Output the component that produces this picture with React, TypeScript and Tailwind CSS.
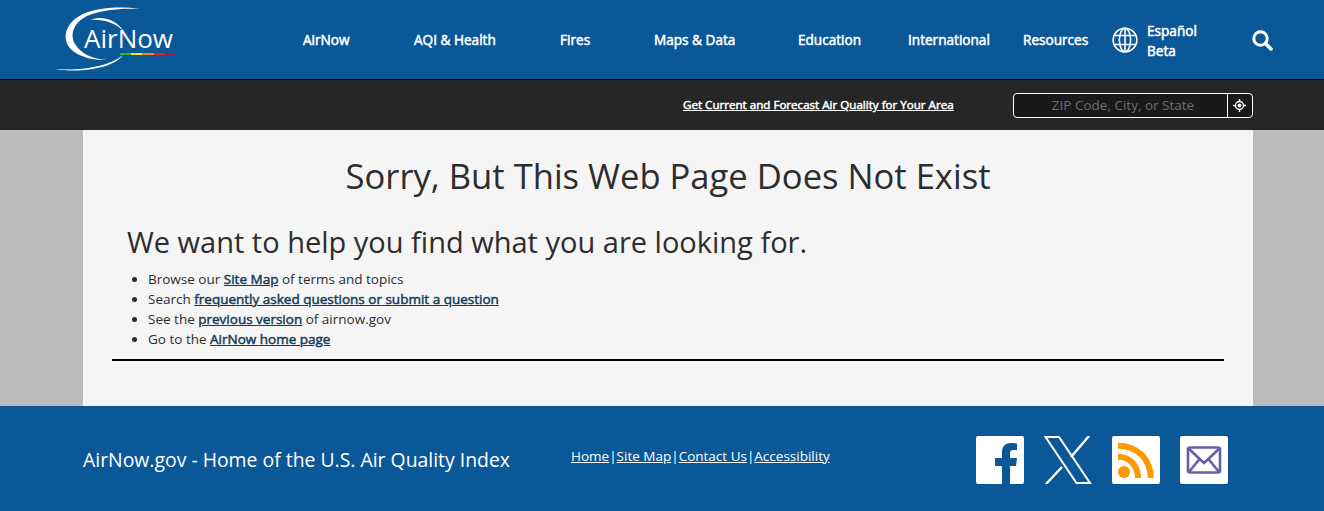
const navItems = [
    { label: 'AirNow', width: 'w-[111px]' },
    { label: 'AQI & Health', width: 'w-[146px]' },
    { label: 'Fires', width: 'w-[94px]' },
    { label: 'Maps & Data', width: 'w-[144px]' },
    { label: 'Education', width: 'w-[110px]' },
    { label: 'International', width: 'w-[115px]' },
    { label: 'Resources', width: 'w-[89px]' },
]

const fauxBold = '[-webkit-text-stroke:0.5px_currentColor]'

const Logo = () => (
    <svg width="122" height="66" viewBox="0 0 122 66" className="block">
        <path d="M85 4C62 1 42 3 28 9C13 16 6 30 14 42C20 50 36 56 52 55C38 54 26 49 20 39C14 28 20 17 32 11C46 5 66 3 85 4Z" fill="#fff" />
        <path d="M35 15C46 10 62 14 70 28C62 18 48 14 35 15Z" fill="#fff" />
        <path d="M0 64C24 66 54 62 68 50C58 64 24 68 0 64Z" fill="#fff" />
        <text x="29" y="43" fontSize="26" fill="#fff" fontFamily="'Open Sans', sans-serif">AirNow</text>
        <rect x="65" y="48" width="11" height="2" fill="#2db52d" />
        <rect x="76" y="48" width="11" height="2" fill="#f5e416" />
        <rect x="87" y="48" width="12" height="2" fill="#f08a1c" />
        <rect x="99" y="48" width="11" height="2" fill="#ec1c24" />
        <rect x="110" y="48" width="11" height="2" fill="#8f1f5c" />
    </svg>
)

const GlobeIcon = () => (
    <svg width="26" height="26" viewBox="0 0 26 26" fill="none" stroke="#fff" strokeWidth="1.6" className="mr-[9px]">
        <circle cx="13" cy="13" r="11.8" />
        <ellipse cx="13" cy="13" rx="5.6" ry="11.8" />
        <path d="M13 1.2V24.8M2.6 8.5H23.4M2.6 17.5H23.4" />
    </svg>
)

const SearchIcon = () => (
    <svg width="22" height="22" viewBox="0 0 22 22" fill="none" stroke="#fff">
        <circle cx="9.5" cy="9.5" r="6.7" strokeWidth="3" />
        <path d="M14.5 14.5L20 20" strokeWidth="3.6" strokeLinecap="round" />
    </svg>
)

const Locate = () => (
    <svg width="13" height="13" viewBox="0 0 13 13" fill="none">
        <circle cx="6.5" cy="6.5" r="4" stroke="#fff" strokeWidth="1.4" />
        <circle cx="6.5" cy="6.5" r="1.9" fill="#fff" />
        <path d="M6.5 0V2.5M6.5 10.5V13M0 6.5H2.5M10.5 6.5H13" stroke="#fff" strokeWidth="1.4" />
    </svg>
)

const Facebook = () => (
    <div className="h-12 w-12 overflow-hidden rounded-[2px] bg-white">
        <svg width="48" height="48" viewBox="0 0 48 48">
            <path d="M26 48V30H19V22H26V16C26 10 30 7 35 7C37 7 39.5 7.2 41 7.5V14H37C35 14 34 15 34 17V22H41L40 30H34V48Z" fill="#0b5899" />
        </svg>
    </div>
)

const XLogo = () => (
    <svg width="48" height="48" viewBox="0 0 48 48" fill="none">
        <path d="M1.5 1H15L46 47H32.5Z" stroke="#fff" strokeWidth="2" />
        <path d="M45 0L27 21M18 31L2 48" stroke="#fff" strokeWidth="2.4" />
    </svg>
)

const Rss = () => (
    <div className="h-12 w-12 rounded-[2px] bg-white">
        <svg width="48" height="48" viewBox="0 0 48 48" fill="none">
            <circle cx="12" cy="36" r="6" fill="#f90" />
            <path d="M6 20.7C18 20.7 26 30 26 42" stroke="#f90" strokeWidth="6" />
            <path d="M6 9.7C25 9.7 38.7 23 38.7 42" stroke="#f90" strokeWidth="6" />
        </svg>
    </div>
)

const Mail = () => (
    <div className="h-12 w-12 rounded-[2px] bg-white">
        <svg width="48" height="48" viewBox="0 0 48 48" fill="none" stroke="#6a5ba8" strokeWidth="2.6">
            <rect x="8" y="11.5" width="32" height="25" rx="2" />
            <path d="M8.5 12.5L24 27L39.5 12.5M9 36L19.5 23M39 36L28.5 23" />
        </svg>
    </div>
)

export default function App() {
    return (
        <div className="font-['Open_Sans',sans-serif] text-[#2d2d2d]">
            <header className="flex h-20 border-b border-black bg-[#0b5899] pl-[55px] text-white">
                <div className="w-[248px] pt-[5px]">
                    <Logo />
                </div>
                <nav className={`flex items-center text-[13.6px] ${fauxBold}`}>
                    {navItems.map((item) => (
                        <a key={item.label} className={`${item.width} pt-[2px]`}>
                            {item.label}
                        </a>
                    ))}
                    <GlobeIcon />
                    <a className="w-[104px] pt-[2px] leading-5">
                        Español
                        <br />
                        Beta
                    </a>
                    <SearchIcon />
                </nav>
            </header>

            <div className="flex h-[50px] items-center bg-[#262626] pl-[683px] text-white">
                <a className={`w-[330px] text-[11.6px] underline ${fauxBold}`}>
                    Get Current and Forecast Air Quality for Your Area
                </a>
                <div className="flex h-[25px] w-[240px] rounded-[4px] border border-white bg-[#191919]">
                    <div className="flex-1 pl-[5px] text-center text-[13.5px] leading-[23px] text-[#6e6e6e]">
                        ZIP Code, City, or State
                    </div>
                    <div className="flex w-[25px] items-center justify-center border-l border-white pr-[2px]">
                        <Locate />
                    </div>
                </div>
            </div>

            <main className="bg-[#bbbbbb] pr-[71px] pl-[83px]">
                <div className="h-[276px] bg-[#f5f5f5] pt-[22px]">
                    <h1 className="text-center text-[34.6px] leading-[48px]">Sorry, But This Web Page Does Not Exist</h1>
                    <h2 className="mt-[22px] ml-[44px] text-[29px] leading-[40px]">
                        We want to help you find what you are looking for.
                    </h2>
                    <ul className="mt-[7px] ml-[65px] list-disc text-[13.5px] leading-5">
                        <li>
                            Browse our <a className={`text-[#153e5c] underline ${fauxBold}`}>Site Map</a> of terms and topics
                        </li>
                        <li>
                            Search{' '}
                            <a className={`text-[#153e5c] underline ${fauxBold}`}>frequently asked questions or submit a question</a>
                        </li>
                        <li>
                            See the <a className={`text-[#153e5c] underline ${fauxBold}`}>previous version</a> of airnow.gov
                        </li>
                        <li>
                            Go to the <a className={`text-[#153e5c] underline ${fauxBold}`}>AirNow home page</a>
                        </li>
                    </ul>
                    <hr className="mx-[29px] mt-[10px] border-t-2 border-black" />
                </div>
            </main>

            <footer className="flex h-[105px] items-start bg-[#0b5899] pt-[30px] pl-[83px] text-white">
                <div className="mt-[10px] w-[488px] text-[19.4px] leading-7">AirNow.gov - Home of the U.S. Air Quality Index</div>
                <div className="mt-[10px] flex w-[405px] text-[13.5px] leading-5">
                    <a className="underline">Home</a>|<a className="underline">Site Map</a>|
                    <a className="underline">Contact Us</a>|<a className="underline">Accessibility</a>
                </div>
                <div className="flex gap-5">
                    <Facebook />
                    <XLogo />
                    <Rss />
                    <Mail />
                </div>
            </footer>
        </div>
    )
}
